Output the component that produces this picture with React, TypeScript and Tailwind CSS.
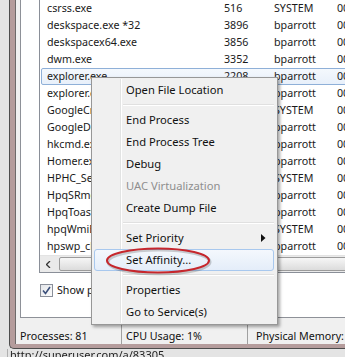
import React from "react";

const rows: [string, string, string][] = [
  ["csrss.exe", "516", "SYSTEM"],
  ["deskspace.exe *32", "3896", "bparrott"],
  ["deskspacex64.exe", "3856", "bparrott"],
  ["dwm.exe", "3352", "bparrott"],
  ["explorer.exe", "2208", "bparrott"],
  ["explorer.exe", "4012", "bparrott"],
  ["GoogleCrashHandler.exe", "2356", "SYSTEM"],
  ["GoogleDesktop.exe", "4480", "bparrott"],
  ["hkcmd.exe", "3704", "bparrott"],
  ["Homer.exe", "4676", "bparrott"],
  ["HPHC_Service.exe", "1804", "SYSTEM"],
  ["HpqSRmon.exe", "4540", "bparrott"],
  ["HpqToaster.exe", "4948", "bparrott"],
  ["hpqWmiEx.exe", "2988", "SYSTEM"],
  ["hpswp_clientservice.exe", "5036", "bparrott"],
];

const font = { fontFamily: '"Noto Sans", "Open Sans", sans-serif' };

function Item({ label, disabled, hover, arrow }: { label: string; disabled?: boolean; hover?: boolean; arrow?: boolean }) {
  return (
    <div className="relative h-[22px] flex items-center">
      {hover && (
        <div className="absolute left-[1px] right-[2px] top-0 bottom-0 rounded-[3px] border border-[#a8c8ee] bg-gradient-to-b from-[#f4f8fd] to-[#e4edf9]" />
      )}
      <span className={"relative pl-[33px] text-[11.2px] whitespace-nowrap " + (disabled ? "text-[#8e8e8e]" : "text-[#111]")}>{label}</span>
      {arrow && (
        <svg className="absolute right-[10px] top-[7px]" width="5" height="8" viewBox="0 0 5 8">
          <path d="M0 0 L4.5 4 L0 8 Z" fill="#111" />
        </svg>
      )}
    </div>
  );
}

function Sep() {
  return (
    <div className="h-[8px] flex flex-col justify-center pl-[30px] pr-[2px]">
      <div className="h-px bg-[#e0e0e0]" />
      <div className="h-px bg-white" />
    </div>
  );
}

export default function App() {
  return (
    <div className="relative w-[345px] h-[357px] overflow-hidden bg-[#e4e4e4]" style={font}>
      {/* window frame */}
      <div className="h-[349px] ml-[9px] border-l border-b border-[#4d4d4d] bg-[#b59c9c] pl-[5px] pb-[4px] rounded-bl-[5px]">
        <div className="h-full border-l border-[#6e6a6a] bg-[#f0f0f0] flex flex-col">
          {/* tab page */}
          <div className="ml-[4px] h-[318px] shrink-0 border-l border-b border-[#8e9198] bg-white pl-[18px] flex flex-col">
            {/* list */}
            <div className="h-[273px] shrink-0 border-l border-b border-[#8a8f98] flex flex-col text-[10.7px] text-[#1a1a1a]">
              <div className="h-[255px] shrink-0 flex flex-col">
                {rows.map((r, i) => (
                  <div key={i} className="relative h-[17px] shrink-0 flex items-center whitespace-nowrap">
                    {i === 4 && (
                      <div className="absolute left-[1px] -right-[4px] top-0 bottom-0 rounded-[2px] border border-[#8fb0d8] bg-gradient-to-b from-[#f4f8fd] to-[#e8f0fa]" />
                    )}
                    <span className="relative w-[184px] pl-[7px] shrink-0 overflow-hidden">{r[0]}</span>
                    <span className="relative w-[50px] shrink-0">{r[1]}</span>
                    <span className="relative w-[63px] shrink-0">{r[2]}</span>
                    <span className="relative shrink-0">00</span>
                  </div>
                ))}
              </div>
              {/* horizontal scrollbar */}
              <div className="h-[17px] shrink-0 flex items-center bg-[#eaeaea] border-t border-[#e3e3e3]">
                <div className="w-[17px] h-full shrink-0 flex items-center justify-center">
                  <svg width="5" height="7" viewBox="0 0 5 7">
                    <path d="M4 0 L0.5 3.5 L4 7" fill="none" stroke="#333" strokeWidth="1.3" />
                  </svg>
                </div>
                <div className="h-[14px] w-[300px] shrink-0 ml-[2px] rounded-[2px] border border-[#9b9b9b] bg-gradient-to-b from-[#f6f6f6] to-[#dcdcdc]" />
              </div>
            </div>
            {/* checkbox */}
            <div className="flex items-center mt-[10px] ml-[1px] h-[14px] whitespace-nowrap">
              <div className="w-[13px] h-[13px] shrink-0 border border-[#8a8f9a] bg-gradient-to-br from-[#e4e6ea] to-[#fbfbfb] flex items-center justify-center">
                <svg width="9" height="9" viewBox="0 0 9 9">
                  <path d="M1 4.5 L3.5 7.5 L8 1" fill="none" stroke="#3a4f7a" strokeWidth="1.6" />
                </svg>
              </div>
              <span className="ml-[4px] text-[10.7px] text-[#111]">Show processes from all users</span>
            </div>
          </div>
          {/* status bar */}
          <div className="mt-[7px] h-[19px] shrink-0 flex text-[10.7px] text-[#111] whitespace-nowrap">
            <div className="w-[106px] shrink-0 pl-[4px] pt-[4px] h-full flex items-center border-r border-[#a0a0a0]">Processes: 81</div>
            <div className="w-[126px] shrink-0 pl-[4px] pt-[4px] h-full flex items-center border-r border-[#a0a0a0]">CPU Usage: 1%</div>
            <div className="shrink-0 pl-[8px] pt-[4px] h-full flex items-center">Physical Memory: 41%</div>
          </div>
        </div>
      </div>
      {/* below window */}
      <div className="flex h-[8px]">
        <div className="w-[8px] h-full shrink-0 border-r border-[#b0b0b0]" />
        <div className="pl-[2px] -mt-[2px] text-[11px] text-[#222] whitespace-nowrap blur-[0.6px]">http://superuser.com/a/83305</div>
      </div>

      {/* context menu */}
      <div className="absolute left-[91px] top-[77px] w-[187px] h-[248px] border border-[#979797] bg-[#f0f0f0] p-[1px] shadow-[2px_2px_3px_rgba(0,0,0,0.35)]">
        <div className="absolute left-[28px] top-[1px] bottom-[1px] w-px bg-[#e2e3e3]" />
        <div className="absolute left-[29px] top-[1px] bottom-[1px] w-px bg-white" />
        <div className="relative flex flex-col">
          <Item label="Open File Location" />
          <Sep />
          <Item label="End Process" />
          <Item label="End Process Tree" />
          <Item label="Debug" />
          <Item label="UAC Virtualization" disabled />
          <Item label="Create Dump File" />
          <Sep />
          <Item label="Set Priority" arrow />
          <Item label="Set Affinity..." hover />
          <Sep />
          <Item label="Properties" />
          <Item label="Go to Service(s)" />
        </div>
      </div>

      {/* red ellipse annotation */}
      <svg className="absolute left-[100px] top-[242px]" width="120" height="36" viewBox="0 0 120 36">
        <ellipse cx="59" cy="20" rx="51" ry="12" fill="none" stroke="rgba(0,0,0,0.18)" strokeWidth="3" />
        <ellipse cx="58" cy="18.5" rx="51" ry="12" fill="none" stroke="#c6262c" strokeWidth="2" />
      </svg>
    </div>
  );
}
